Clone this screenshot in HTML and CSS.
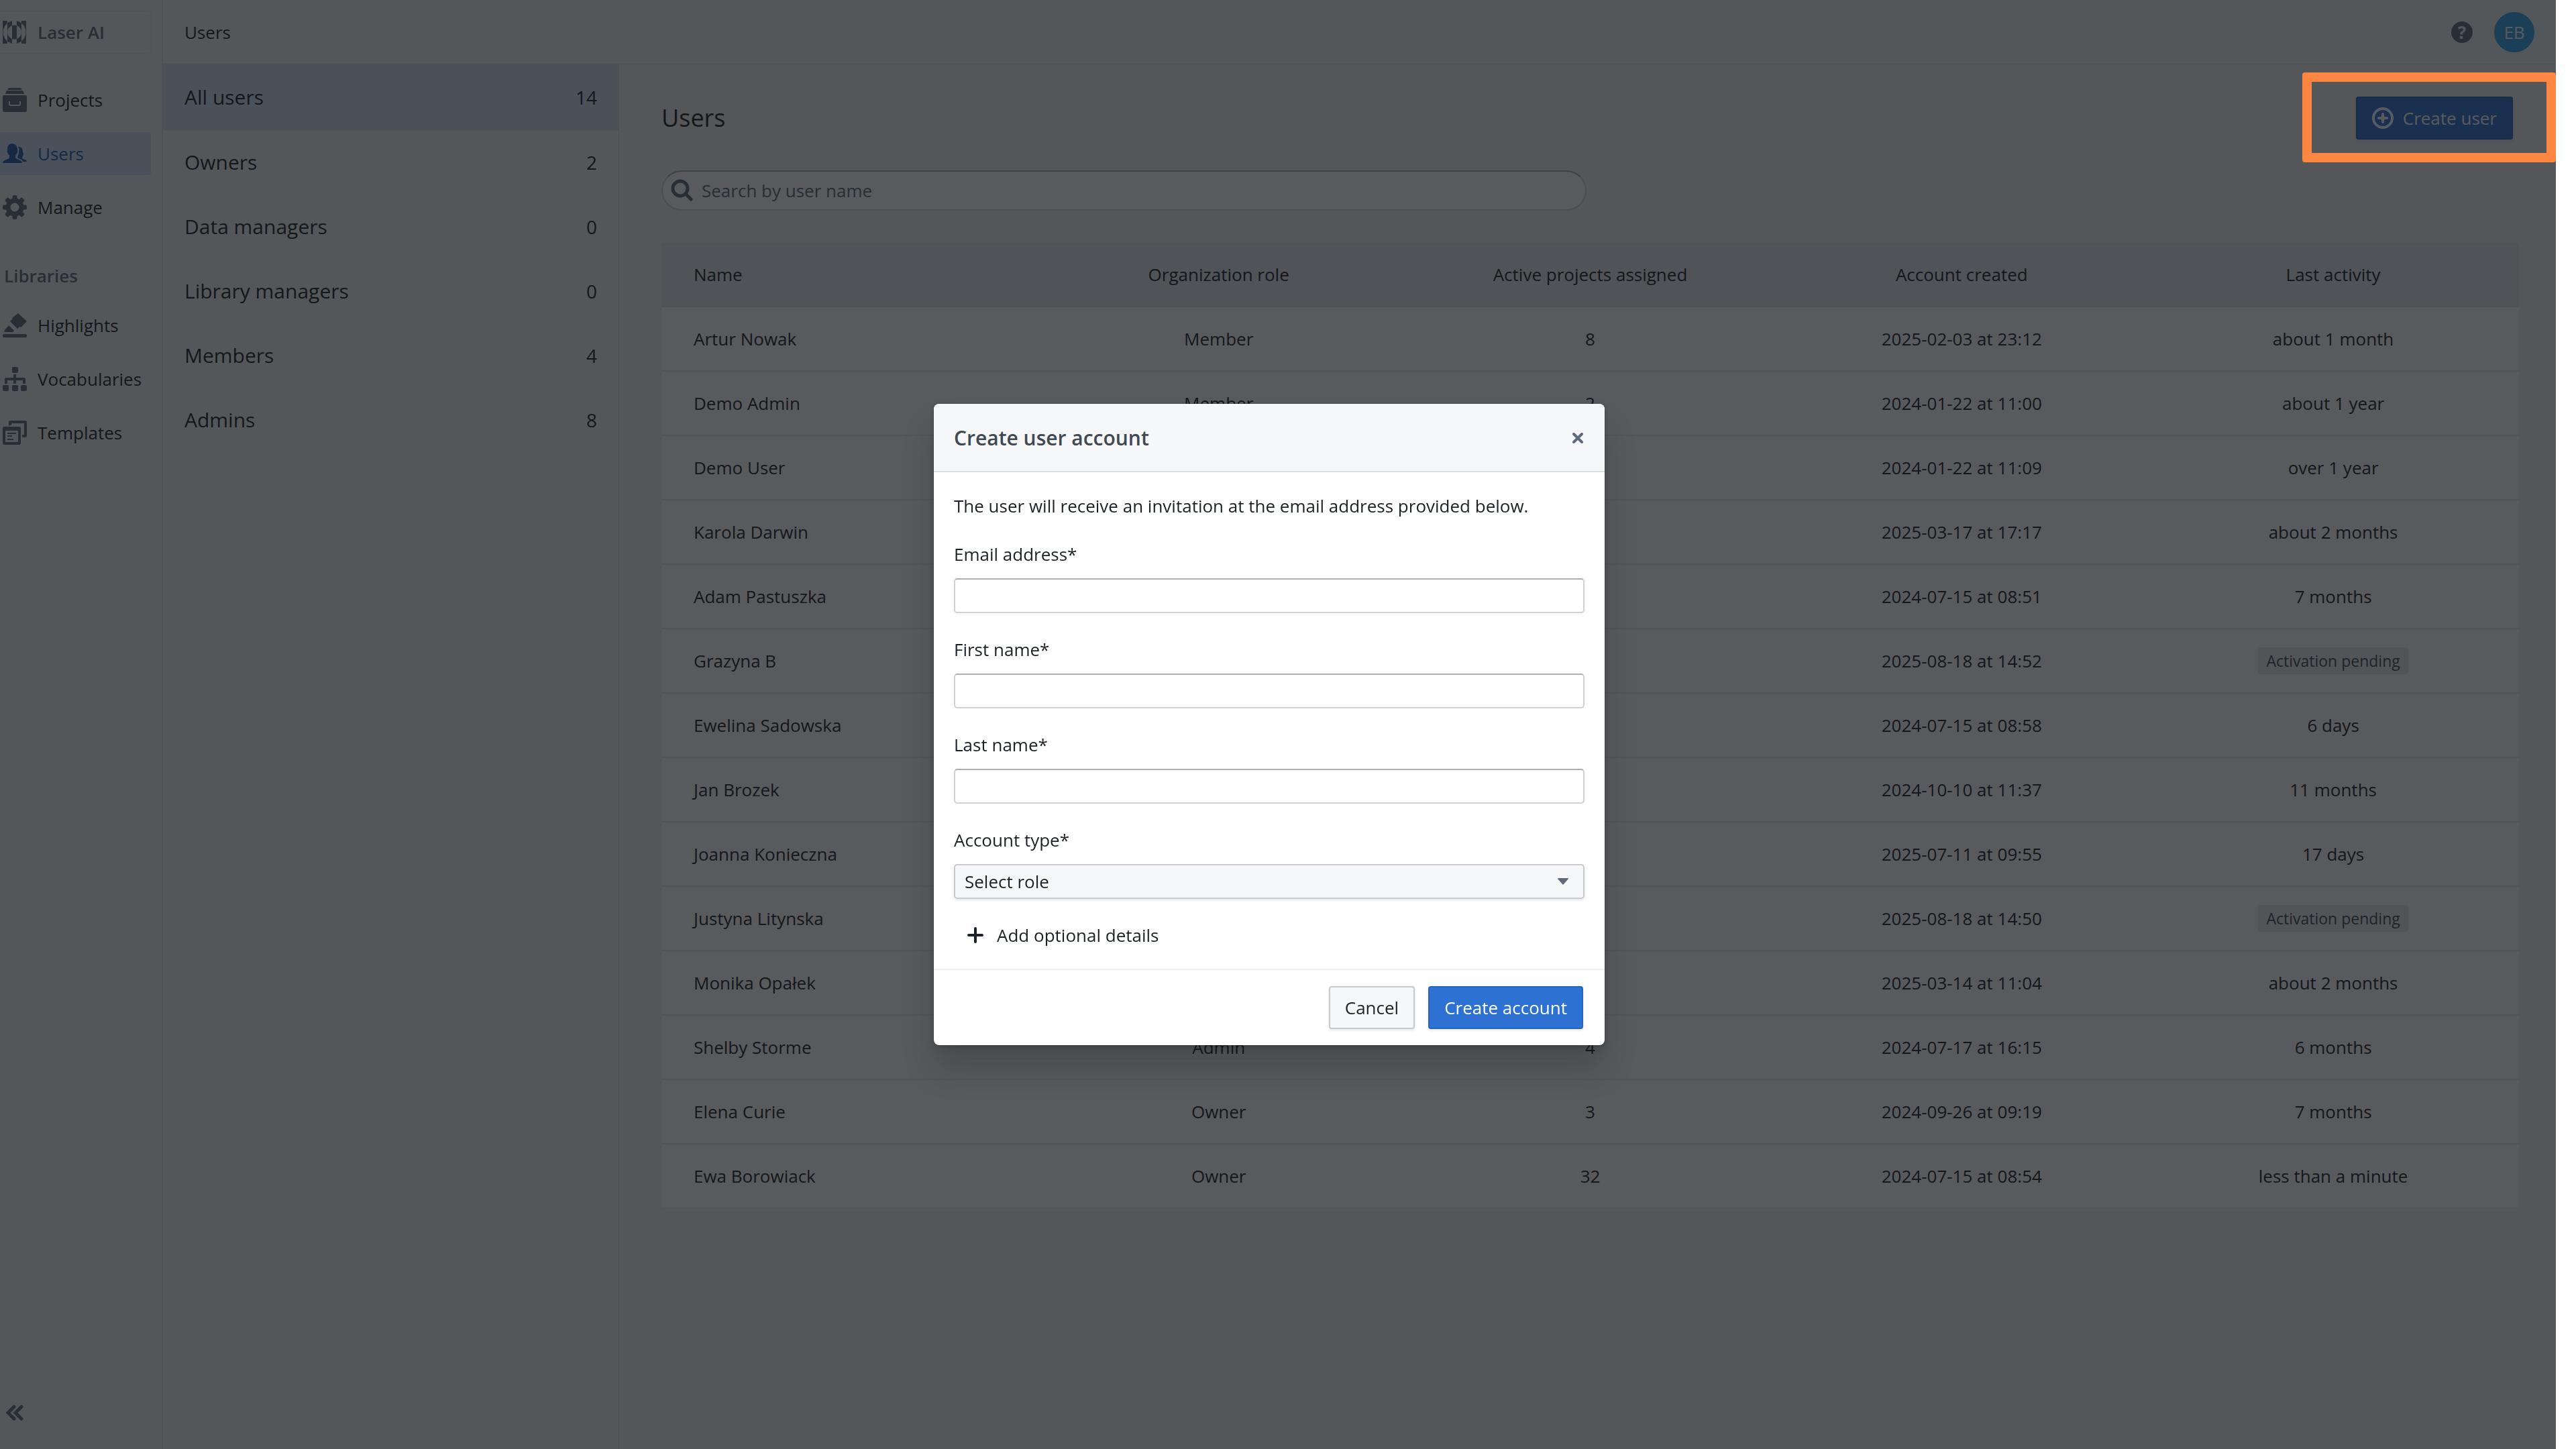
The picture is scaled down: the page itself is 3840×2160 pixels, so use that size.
FILE: index.html
```html
<!DOCTYPE html>
<html lang="en">
<head>
    <meta charset="UTF-8">
    <meta name="viewport" content="width=device-width, initial-scale=1.0">
    <title>Users - Laser AI</title>
    <link rel="stylesheet" href="styles.css">
</head>
<body>
    <div class="app">
        <nav class="rail">
            <a class="brand" href="#">
                <svg class="icon" viewBox="0 0 36 36"><path fill-rule="evenodd" d="M0 1h7v34H0zM14 1h7v34h-7zM28 1h7v34h-7zM0.500 18a17 17 0 1 0 34 0a17 17 0 1 0-34 0zM7 18a10.500 10.500 0 1 0 21 0a10.500 10.500 0 1 0-21 0z"/></svg>
                Laser AI
            </a>
            <div class="nav-group">
                <a class="nav-item" href="#">
                    <svg class="icon" viewBox="0 0 36 36"><path d="M9 0h18l2 3H7zM7 4h22q2 0 2 2l1 3H4l1-3q0-2 2-2z"/><path fill-rule="evenodd" d="M2 11h32q2 0 2 2v21q0 2-2 2H2q-2 0-2-2V13q0-2 2-2zM9 20v4q0 3 3 3h12q3 0 3-3v-4h-2v4q0 1-1 1H12q-1 0-1-1v-4z"/></svg>
                    Projects
                </a>
                <a class="nav-item active" href="#">
                    <svg class="icon" viewBox="0 0 36 36"><path d="M14 3c5 0 8 4 8 9 0 1 1 2 0 4-1 1-1 3-3 5v3c1 3 10 3 10 8H0c0-5 9-5 10-8v-3c-2-2-2-4-3-5-1-2 0-3 0-4 0-5 2-9 7-9z"/><path d="M23 8c5-1 7 3 7 8 0 1 1 1 1 3s-2 3-2 5c0 3 7 2 7 6h-6c-1-4-6-4-8-6 0-3 2-4 2-7 1-4 1-6-1-9z"/></svg>
                    Users
                </a>
                <a class="nav-item" href="#">
                    <svg class="icon" viewBox="0 0 36 36"><g id="tooth"><rect x="14.500" y="0" width="7" height="9" rx="2"/><rect x="14.500" y="27" width="7" height="9" rx="2"/></g><use href="#tooth" transform="rotate(45 18 18)"/><use href="#tooth" transform="rotate(90 18 18)"/><use href="#tooth" transform="rotate(135 18 18)"/><circle cx="18" cy="18" r="10" fill="none" stroke="currentColor" stroke-width="7"/></svg>
                    Manage
                </a>
            </div>
            <h2 class="rail-heading">Libraries</h2>
            <div class="nav-group">
                <a class="nav-item" href="#">
                    <svg class="icon" viewBox="0 0 36 36"><path d="M23 0l13 12-9 9-2-1-3 3-11-11 4-4-1-1zM9 18l8 8-2 2H4q-3 0-1-3z"/><rect y="31" width="36" height="5" rx="2"/></svg>
                    Highlights
                </a>
                <a class="nav-item" href="#">
                    <svg class="icon" viewBox="0 0 36 36"><rect x="14" y="0" width="9" height="9" rx="2"/><rect x="0" y="27" width="9" height="9" rx="2"/><rect x="14" y="27" width="9" height="9" rx="2"/><rect x="27" y="27" width="9" height="9" rx="2"/><path d="M16 11h4v5h12q2 0 2 2v7h-4v-5H20v5h-4v-5H7v5H3v-7q0-2 2-2h11z"/></svg>
                    Vocabularies
                </a>
                <a class="nav-item" href="#">
                    <svg class="icon" viewBox="0 0 36 36"><path fill-rule="evenodd" d="M2 9h23q2 0 2 2v23q0 2-2 2H2q-2 0-2-2V11q0-2 2-2zM4 15v17h19V15z"/><path d="M9 7V2q0-2 2-2h23q2 0 2 2v21q0 2-2 2h-5v-4h3V4H13v3z"/><path d="M7 18h13v2H7zM7 22h7v2H7zM7 27h9v2H7z"/></svg>
                    Templates
                </a>
            </div>
            <button class="collapse" type="button" aria-label="Collapse sidebar">
                <svg viewBox="0 0 26 24"><path d="M12 3L3 12l9 9M23 3l-9 9 9 9"/></svg>
            </button>
        </nav>

        <div class="page">
            <header class="topbar">
                <a class="crumb" href="#">Users</a>
                <div class="topbar-tools">
                    <button class="help" type="button" aria-label="Help">?</button>
                    <button class="avatar" type="button">EB</button>
                </div>
            </header>
            <div class="columns">
                <aside class="roles">
                    <a class="role selected" href="#">All users <span class="count">14</span></a>
                    <a class="role" href="#">Owners <span class="count">2</span></a>
                    <a class="role" href="#">Data managers <span class="count">0</span></a>
                    <a class="role" href="#">Library managers <span class="count">0</span></a>
                    <a class="role" href="#">Members <span class="count">4</span></a>
                    <a class="role" href="#">Admins <span class="count">8</span></a>
                </aside>
                <main class="content">
                    <div class="content-head">
                        <h1>Users</h1>
                        <button class="btn btn-primary create-user" type="button">
                            <svg viewBox="0 0 32 32"><circle cx="16" cy="16" r="14"/><path d="M16 10v12M10 16h12"/></svg>
                            Create user
                        </button>
                    </div>
                    <label class="search">
                        <svg viewBox="0 0 34 34"><circle cx="14" cy="14" r="11"/><path d="M23 23l7 7"/></svg>
                        <input type="search" placeholder="Search by user name" aria-label="Search by user name">
                    </label>
                    <table class="users">
                        <thead>
                            <tr><th>Name</th><th>Organization role</th><th>Active projects assigned</th><th>Account created</th><th>Last activity</th></tr>
                        </thead>
                        <tbody>
                            <tr><td>Artur Nowak</td><td>Member</td><td>8</td><td>2025-02-03 at 23:12</td><td>about 1 month</td></tr>
                            <tr><td>Demo Admin</td><td>Member</td><td>2</td><td>2024-01-22 at 11:00</td><td>about 1 year</td></tr>
                            <tr><td>Demo User</td><td>Member</td><td>2</td><td>2024-01-22 at 11:09</td><td>over 1 year</td></tr>
                            <tr><td>Karola Darwin</td><td>Member</td><td>3</td><td>2025-03-17 at 17:17</td><td>about 2 months</td></tr>
                            <tr><td>Adam Pastuszka</td><td>Admin</td><td>5</td><td>2024-07-15 at 08:51</td><td>7 months</td></tr>
                            <tr><td>Grazyna B</td><td>Admin</td><td>0</td><td>2025-08-18 at 14:52</td><td><span class="tag">Activation pending</span></td></tr>
                            <tr><td>Ewelina Sadowska</td><td>Admin</td><td>9</td><td>2024-07-15 at 08:58</td><td>6 days</td></tr>
                            <tr><td>Jan Brozek</td><td>Admin</td><td>4</td><td>2024-10-10 at 11:37</td><td>11 months</td></tr>
                            <tr><td>Joanna Konieczna</td><td>Admin</td><td>6</td><td>2025-07-11 at 09:55</td><td>17 days</td></tr>
                            <tr><td>Justyna Litynska</td><td>Admin</td><td>0</td><td>2025-08-18 at 14:50</td><td><span class="tag">Activation pending</span></td></tr>
                            <tr><td>Monika Opałek</td><td>Admin</td><td>2</td><td>2025-03-14 at 11:04</td><td>about 2 months</td></tr>
                            <tr><td>Shelby Storme</td><td>Admin</td><td>4</td><td>2024-07-17 at 16:15</td><td>6 months</td></tr>
                            <tr><td>Elena Curie</td><td>Owner</td><td>3</td><td>2024-09-26 at 09:19</td><td>7 months</td></tr>
                            <tr><td>Ewa Borowiack</td><td>Owner</td><td>32</td><td>2024-07-15 at 08:54</td><td>less than a minute</td></tr>
                        </tbody>
                    </table>
                </main>
            </div>
        </div>
    </div>

    <div class="backdrop">
        <form class="dialog" role="dialog" aria-labelledby="dialog-title">
            <div class="dialog-head">
                <h2 id="dialog-title">Create user account</h2>
                <button class="close" type="button" aria-label="Close">
                    <svg viewBox="0 0 16 16"><path d="M2 2l12 12M14 2L2 14"/></svg>
                </button>
            </div>
            <div class="dialog-body">
                <p>The user will receive an invitation at the email address provided below.</p>
                <div class="field">
                    <label for="email">Email address*</label>
                    <input id="email" type="email">
                </div>
                <div class="field">
                    <label for="first-name">First name*</label>
                    <input id="first-name" type="text">
                </div>
                <div class="field">
                    <label for="last-name">Last name*</label>
                    <input id="last-name" type="text">
                </div>
                <div class="field">
                    <label for="account-type">Account type*</label>
                    <div class="select">
                        <select id="account-type">
                            <option>Select role</option>
                        </select>
                        <svg viewBox="0 0 16 10"><path d="M1 0h14q1 0 1 1L9 9q-1 1-2 0L0 1q0-1 1-1z"/></svg>
                    </div>
                </div>
                <button class="more" type="button">
                    <svg viewBox="0 0 24 24"><path d="M12 2v20M2 12h20"/></svg>
                    Add optional details
                </button>
            </div>
            <div class="dialog-foot">
                <button class="btn" type="button">Cancel</button>
                <button class="btn btn-primary" type="submit">Create account</button>
            </div>
        </form>
    </div>
    <div class="callout"></div>
</body>
</html>
```
FILE: styles.css
```css
* {
    box-sizing: border-box;
}
body {
    margin: 0;
    background-color: #fff;
    color: #1c2127;
    font-family: 'Open Sans', 'Noto Sans', sans-serif;
    font-size: 26px;
    line-height: 36px;
}
h1, h2, p {
    margin: 0;
}
a {
    color: inherit;
    text-decoration: none;
}
button, input, select {
    font: inherit;
    color: inherit;
}
button {
    padding: 0;
    border: 0;
    background: none;
}
svg {
    display: block;
    flex: none;
}
.app {
    display: flex;
    min-height: 100vh;
    margin-right: 30px;
    background-color: #f0f0f2;
}

/* left rail */
.rail {
    display: flex;
    flex-direction: column;
    width: 243px;
    padding: 16px 16px 38px 0;
    border-right: 2px solid #e6dce0;
    background-color: #f0f6f5;
}
.icon {
    width: 36px;
    height: 36px;
    fill: #5f6b7c;
    color: #5f6b7c;
}
.brand, .nav-item {
    display: flex;
    align-items: center;
    gap: 16px;
    height: 64px;
    padding-left: 4px;
    border-radius: 0 4px 4px 0;
}
.brand {
    margin-bottom: 37px;
    border: 1px solid #e4eae9;
    border-left: 0;
    color: #5f6b7c;
    font-weight: 600;
}
.nav-group {
    display: flex;
    flex-direction: column;
    gap: 16px;
}
.nav-item.active {
    background-color: #d2e1f4;
    color: #215db0;
}
.nav-item.active .icon {
    fill: #215db0;
}
.rail-heading {
    margin: 52px 0 24px 6px;
    color: #5f6b7c;
    font-size: 26px;
    font-weight: 600;
}
.collapse {
    width: 26px;
    height: 24px;
    margin: auto 0 4px 9px;
}
.collapse svg, .create-user svg, .search svg, .close svg, .more svg {
    fill: none;
    stroke: currentColor;
    stroke-linecap: round;
}
.collapse svg {
    width: 26px;
    color: #5f6b7c;
    stroke-width: 5;
}

/* top bar */
.page {
    display: flex;
    flex: 1;
    flex-direction: column;
}
.topbar {
    display: flex;
    align-items: center;
    justify-content: space-between;
    height: 96px;
    padding: 0 32px;
    border-bottom: 1px solid #dce0e2;
    background-color: #f0f6f5;
}
.topbar-tools {
    display: flex;
    align-items: center;
    gap: 32px;
}
.help {
    width: 32px;
    height: 32px;
    border-radius: 50%;
    background-color: #5f6b7c;
    color: #f0f6f5;
    font-weight: 700;
    line-height: 32px;
}
.avatar {
    width: 60px;
    height: 60px;
    border-radius: 50%;
    background-color: #2fa3e8;
    color: #fff;
}
.columns {
    display: flex;
    flex: 1;
}

/* role filter */
.roles {
    width: 680px;
    border-right: 1px solid #dce0e2;
    background-color: #f0f6f5;
    font-size: 30px;
}
.role {
    display: flex;
    align-items: center;
    justify-content: space-between;
    height: 96px;
    padding: 0 32px;
}
.role.selected {
    height: 98px;
    border-bottom: 1px solid #dce0e2;
    background-color: #d2e1f0;
}
.count {
    font-size: 28px;
}

/* users list */
.content {
    flex: 1;
    padding: 48px 55px 48px 63px;
}
.content-head {
    display: flex;
    align-items: center;
    justify-content: space-between;
    margin-bottom: 46px;
    padding-right: 9px;
}
h1 {
    font-size: 36px;
    font-weight: 400;
}
.btn {
    display: flex;
    align-items: center;
    height: 64px;
    padding: 0 22px;
    border: 2px solid #c9cacd;
    border-radius: 4px;
    background-color: #f6f7f9;
    box-shadow: 0 2px 4px rgba(17, 20, 24, 0.1);
}
.btn-primary {
    border-color: #2965ba;
    background-color: #2d72d2;
    color: #fff;
}
.create-user {
    gap: 14px;
}
.create-user svg {
    width: 32px;
    stroke-width: 4;
}
.search {
    display: flex;
    align-items: center;
    gap: 12px;
    width: 1379px;
    height: 60px;
    margin-bottom: 48px;
    padding: 0 12px;
    border: 2px solid #d3d4d5;
    border-top-color: #a9abad;
    border-radius: 30px;
    background-color: #fff;
}
.search svg {
    width: 34px;
    color: #5f6b7c;
    stroke-width: 5;
}
.search input {
    flex: 1;
    padding: 0;
    border: 0;
    background: none;
}
.search input::placeholder {
    color: #5f6b7c;
    opacity: 1;
}
.users {
    width: 100%;
    border-spacing: 0;
    table-layout: fixed;
    background-color: #fff;
}
.users th, .users td {
    height: 96px;
    padding: 0 48px;
    border-bottom: 2px solid #e9e9ea;
    text-align: center;
}
.users th {
    border-color: #dce0e2;
    background-color: #e3e7e9;
    font-weight: 400;
}
.users th:first-child, .users td:first-child {
    text-align: left;
}
.tag {
    display: inline-block;
    padding: 2px 12px;
    border-radius: 4px;
    background-color: #e8eeee;
    color: #404854;
    font-size: 23px;
}

/* dialog */
.backdrop {
    position: fixed;
    top: 0;
    right: 30px;
    bottom: 0;
    left: 0;
    display: flex;
    align-items: center;
    justify-content: center;
    padding-right: 26px;
    background-color: rgba(17, 20, 24, 0.7);
}
.dialog {
    width: 1000px;
    border-radius: 8px;
    background-color: #fff;
    box-shadow: 0 0 0 1px rgba(17, 20, 24, 0.1), 0 4px 8px rgba(17, 20, 24, 0.2), 0 36px 48px rgba(17, 20, 24, 0.2);
}
.dialog-head {
    display: flex;
    align-items: center;
    justify-content: space-between;
    height: 102px;
    padding: 2px 32px 0 30px;
    border-bottom: 2px solid #e0e0e1;
    border-radius: 8px 8px 0 0;
    background-color: #f6f7f9;
}
.dialog-head h2 {
    color: #404854;
    font-size: 30px;
    font-weight: 600;
}
.close svg {
    width: 16px;
    color: #5f6b7c;
    stroke-width: 4;
}
.dialog-body {
    display: flex;
    flex-direction: column;
    gap: 36px;
    padding: 32px 30px;
}
.field {
    display: flex;
    flex-direction: column;
    gap: 18px;
}
.field input, .field select {
    width: 100%;
    height: 52px;
    padding: 0 14px;
    border: 2px solid #d0d1d2;
    border-radius: 5px;
}
.field input {
    border-top-color: #acaeb0;
    background-color: #fff;
}
.field select {
    appearance: none;
    border-color: #c9cacd;
    background-color: #f6f7f9;
    box-shadow: 0 2px 4px rgba(17, 20, 24, 0.1);
}
.select {
    position: relative;
}
.select svg {
    position: absolute;
    top: 21px;
    right: 24px;
    width: 16px;
    fill: #5f6b7c;
}
.more {
    display: flex;
    align-items: center;
    gap: 20px;
    margin-left: 20px;
}
.more svg {
    width: 24px;
    stroke-width: 4;
}
.dialog-foot {
    display: flex;
    justify-content: flex-end;
    gap: 20px;
    padding: 24px 32px;
    border-top: 2px solid #f0f0f1;
}

/* highlight round the create button */
.callout {
    position: fixed;
    top: 108px;
    right: 30px;
    width: 378px;
    height: 134px;
    border: 14px solid #ff8640;
    border-radius: 4px;
    pointer-events: none;
}
```
